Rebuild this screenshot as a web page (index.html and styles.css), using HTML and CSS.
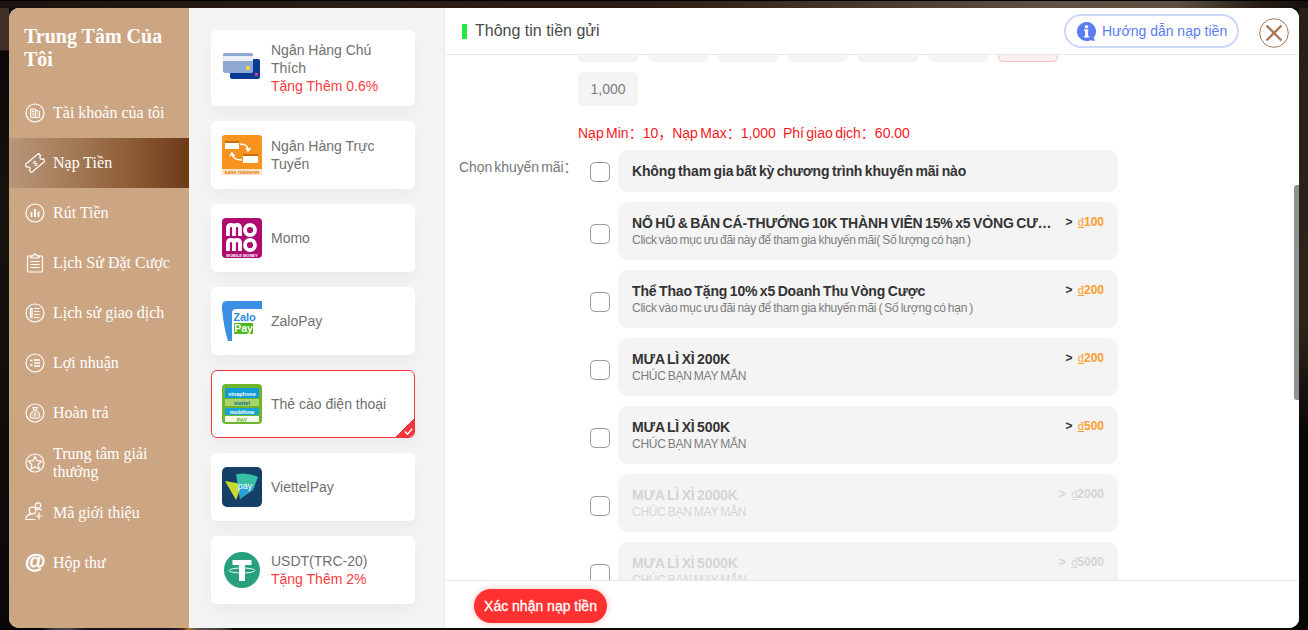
FILE: index.html
```html
<!DOCTYPE html>
<html lang="vi">
<head>
<meta charset="utf-8">
<title>Trung Tâm Của Tôi</title>
<link rel="stylesheet" href="styles.css">
</head>
<body>
<div class="modal">
  <aside class="side">
    <h1 class="side-title">Trung Tâm Của Tôi</h1>
    <nav class="nav">
      <a class="nav-item"><svg class="nav-ic" viewBox="0 0 20 20"><circle cx="10" cy="10" r="9"/><path class="soft" d="M5.500 6h5v8.500h-5zM10.500 7l4 1.500v6h-4M7 8.500h2M7 11h2"/></svg><span>Tài khoản của tôi</span></a>
      <a class="nav-item active"><svg class="nav-ic" viewBox="0 0 20 20"><path transform="rotate(-40 10 10)" d="M1 5h18v3a2 2 0 0 0 0 4v3H1v-3a2 2 0 0 0 0-4z"/><text x="10" y="13" class="dollar" transform="rotate(-25 10 10)">$</text></svg><span>Nạp Tiền</span></a>
      <a class="nav-item"><svg class="nav-ic" viewBox="0 0 20 20"><circle cx="10" cy="10" r="9"/><path class="bars" d="M6.500 9v5M10 6v8M13.500 8.500v5.500"/></svg><span>Rút Tiền</span></a>
      <a class="nav-item"><svg class="nav-ic" viewBox="0 0 20 20"><path d="M6 3H3.500q-1 0-1 1v14q0 1 1 1h13q1 0 1-1V4q0-1-1-1H14M6 5V2.800h2.300q.5-2 1.700-2t1.700 2H14V5zM5.500 8.500h9M5.500 11.500h9M5.500 14.500h9"/></svg><span>Lịch Sử Đặt Cược</span></a>
      <a class="nav-item"><svg class="nav-ic" viewBox="0 0 20 20"><circle cx="10" cy="10" r="9"/><path d="M5.500 5.500h1.500v9H5.500zM9 5.500h5.500M9 8.500h5.500M9 11.500h5.500M9 14.500h5.500"/></svg><span>Lịch sử giao dịch</span></a>
      <a class="nav-item"><svg class="nav-ic" viewBox="0 0 20 20"><circle cx="10" cy="10" r="9"/><path class="bars2" d="M5 7.500h2.500M5 12h2.500M9 7h6M9 10h6M9 13h6"/></svg><span>Lợi nhuận</span></a>
      <a class="nav-item"><svg class="nav-ic" viewBox="0 0 20 20"><circle cx="10" cy="10" r="9"/><path class="soft" d="M7.500 4.500h5L11 7.300q4 2 4 5.700 0 2.200-2 2.200H7q-2 0-2-2.200 0-3.700 4-5.700zM9 7.300h2M10 9.500v4"/></svg><span>Hoàn trả</span></a>
      <a class="nav-item"><svg class="nav-ic" viewBox="0 0 20 20"><circle cx="10" cy="10" r="9"/><path d="m10 3.500 2 4.200 4.600.6-3.400 3.200.9 4.500-4.100-2.200-4.100 2.200.9-4.500-3.400-3.200 4.600-.6z"/></svg><span>Trung tâm giải thưởng</span></a>
      <a class="nav-item"><svg class="nav-ic up" viewBox="0 0 20 20"><circle cx="7.500" cy="8.500" r="3.300"/><circle cx="13" cy="3.500" r="2.700"/><path d="M.8 17.500q0-4.800 5.700-5.300M.8 17.500h9.500M14 10.500v7M10.800 14h6.500M11 7.500q3-1 6 .8"/></svg><span>Mã giới thiệu</span></a>
      <a class="nav-item"><span class="at">@</span><span>Hộp thư</span></a>
    </nav>
  </aside>
  <section class="methods">
    <div class="method m1"><svg class="logo" viewBox="0 0 40 40"><rect x="8" y="11" width="30" height="20" rx="2" fill="#0a3a94"/><rect x="1" y="5" width="30" height="20" rx="2" fill="#8ea7d3"/><rect x="1" y="8" width="30" height="5" fill="#e9eef7"/><rect x="24" y="18" width="4" height="4" fill="#efd24c"/><rect x="33" y="25" width="3" height="3" fill="#d63a8c"/></svg><div class="m-txt"><div>Ngân Hàng Chú Thích</div><div class="bonus">Tặng Thêm 0.6%</div></div></div>
    <div class="method m2"><svg class="logo" viewBox="0 0 40 40"><rect width="40" height="40" rx="3" fill="#f7931e"/><rect y="34" width="40" height="6" fill="#fbe3c3"/><rect x="3" y="6" width="14" height="8" fill="#fff"/><rect x="3" y="6" width="14" height="2" fill="#c96f10"/><rect x="21" y="19" width="15" height="9" fill="#fff"/><rect x="21" y="19" width="15" height="2" fill="#c96f10"/><path d="M18 9q8 0 8 6M24 13l2 3 2.500-3M20 25q-9 0-10-6M8 21l2-3 2.500 3" fill="none" stroke="#fff" stroke-width="1.500"/><text x="20" y="39" class="tiny" fill="#e07d10">BANK TRANSFER</text></svg><div class="m-txt"><div>Ngân Hàng Trực Tuyến</div></div></div>
    <div class="method m3"><svg class="logo" viewBox="0 0 40 40"><rect width="40" height="40" rx="4" fill="#ae0a6f"/><g fill="none" stroke="#fff" stroke-width="3.800"><path d="M6 18v-8q0-3 3-3t3 3v8M12 10q0-3 3-3t3 3v8"/><circle cx="28" cy="12" r="5"/><path d="M6 33v-8q0-3 3-3t3 3v8M12 25q0-3 3-3t3 3v8"/><circle cx="28" cy="27" r="5"/></g><text x="20" y="38.600" class="tiny" fill="#fff">MOBILE MONEY</text></svg><div class="m-txt"><div>Momo</div></div></div>
    <div class="method m4"><svg class="logo" viewBox="0 0 40 40"><path d="M5 0h35v8H14q-4 0-4 4v28H6Q2 28 0 8V5q0-5 5-5z" fill="#3b8fe4"/><text x="22.500" y="20" class="zalo" fill="#2a8ae0">Zalo</text><rect x="12" y="22" width="19" height="11" rx="1" fill="#4db71a"/><text x="21.500" y="31" class="zalo2" fill="#fff">Pay</text></svg><div class="m-txt"><div>ZaloPay</div></div></div>
    <div class="method m5 selected"><svg class="logo" viewBox="0 0 40 40"><rect width="40" height="40" rx="4" fill="#6fb52c"/><rect x="3" y="4" width="34" height="10" fill="#0f9ad8"/><rect x="3" y="15" width="34" height="7" fill="#a9d46b"/><rect x="3" y="24" width="34" height="7" fill="#17a3d6"/><rect x="3" y="32" width="34" height="6" fill="#f3f8e8"/><text x="20" y="12" class="tiny2" fill="#fff">vinaphone</text><text x="20" y="20.500" class="tiny2" fill="#0b6f8e">viettel</text><text x="20" y="29.500" class="tiny2" fill="#fff">mobifone</text><text x="20" y="37.500" class="tiny2" fill="#6fb52c">PAY</text></svg><div class="m-txt"><div>Thẻ cào điện thoại</div></div><span class="tick"><svg viewBox="0 0 10 10" class="tick-ic"><path d="m1 5 3 3 5-6"/></svg></span></div>
    <div class="method m6"><svg class="logo" viewBox="0 0 40 40"><rect width="40" height="40" rx="5" fill="#143f67"/><path d="M3 14 20 17l-6 16z" fill="#c9d82e"/><path d="M14 7q12-2 22 3l-5 13-13 9z" fill="#35bfa6"/><path d="M18 32 33 20l-16-1z" fill="#2b9fd8"/><text x="23" y="22" class="vt" fill="#fff">pay</text></svg><div class="m-txt"><div>ViettelPay</div></div></div>
    <div class="method m7"><svg class="logo" viewBox="0 0 40 40"><circle cx="20" cy="20" r="18" fill="#26a17b"/><path d="M10.500 10h19v5H23v16h-6V15h-6.500z" fill="#fff"/><ellipse cx="20" cy="20.500" rx="13" ry="2.500" fill="none" stroke="#fff" stroke-width=".9"/></svg><div class="m-txt"><div>USDT(TRC-20)</div><div class="bonus">Tặng Thêm 2%</div></div></div>
  </section>
  <main class="panel">
    <header class="head">
      <div class="head-title"><i class="green"></i>Thông tin tiền gửi</div>
      <a class="guide"><svg class="guide-ic" viewBox="0 0 22 22"><path d="M11 1a10 10 0 1 0 4.200 19.100L20 21l-1.500-3.500A10 10 0 0 0 11 1z" fill="#5a7cf5"/><rect x="9.500" y="9" width="3.200" height="8" fill="#fff"/><rect x="8.300" y="9" width="4.400" height="1.500" fill="#fff"/><rect x="8.300" y="15.800" width="5.600" height="1.400" fill="#fff"/><circle cx="11" cy="6" r="1.900" fill="#fff"/></svg>Hướng dẫn nạp tiền</a>
      <button class="close" aria-label="Đóng"><svg viewBox="0 0 30 30" class="close-ic"><circle cx="15" cy="15" r="14.300"/><path d="m7.500 7.500 15 15M22.500 7.500l-15 15"/></svg></button>
    </header>
    <div class="body">
      <div class="amounts">
        <span class="amt"></span><span class="amt"></span><span class="amt"></span><span class="amt"></span><span class="amt"></span><span class="amt"></span><span class="amt on"></span>
      </div>
      <div class="amounts"><span class="amt">1,000</span></div>
      <p class="limits">Nạp Min：10，Nạp Max：1,000&nbsp;&nbsp; Phí giao dịch：60.00</p>
      <div class="promo-wrap">
        <div class="promo-label">Chọn khuyến mãi：</div>
        <div class="promos">
          <div class="row"><span class="check first"></span><div class="card single"><b class="p-title">Không tham gia bất kỳ chương trình khuyến mãi nào</b></div></div>
          <div class="row"><span class="check"></span><div class="card"><div class="p-main"><b class="p-title">NỔ HŨ &amp; BẮN CÁ-THƯỞNG 10K THÀNH VIÊN 15% x5 VÒNG CƯỢC</b><div class="p-sub">Click vào mục ưu đãi này để tham gia khuyến mãi( Số lượng có hạn )</div></div><div class="p-min">&gt; <u>đ</u><em>100</em></div></div></div>
          <div class="row"><span class="check"></span><div class="card"><div class="p-main"><b class="p-title">Thể Thao Tặng 10% x5 Doanh Thu Vòng Cược</b><div class="p-sub">Click vào mục ưu đãi này để tham gia khuyến mãi ( Số lượng có hạn )</div></div><div class="p-min">&gt; <u>đ</u><em>200</em></div></div></div>
          <div class="row"><span class="check"></span><div class="card"><div class="p-main"><b class="p-title">MƯA LÌ XÌ 200K</b><div class="p-sub">CHÚC BẠN MAY MẮN</div></div><div class="p-min">&gt; <u>đ</u><em>200</em></div></div></div>
          <div class="row"><span class="check"></span><div class="card"><div class="p-main"><b class="p-title">MƯA LÌ XÌ 500K</b><div class="p-sub">CHÚC BẠN MAY MẮN</div></div><div class="p-min">&gt; <u>đ</u><em>500</em></div></div></div>
          <div class="row"><span class="check"></span><div class="card off"><div class="p-main"><b class="p-title">MƯA LÌ XÌ 2000K</b><div class="p-sub">CHÚC BẠN MAY MẮN</div></div><div class="p-min">&gt; <u>đ</u><em>2000</em></div></div></div>
          <div class="row"><span class="check"></span><div class="card off"><div class="p-main"><b class="p-title">MƯA LÌ XÌ 5000K</b><div class="p-sub">CHÚC BẠN MAY MẮN</div></div><div class="p-min">&gt; <u>đ</u><em>5000</em></div></div></div>
        </div>
      </div>
      <div class="scrollbar"></div>
    </div>
    <footer class="foot"><button class="submit">Xác nhận nạp tiền</button></footer>
  </main>
</div>
</body>
</html>
```
FILE: styles.css
```css
* { box-sizing: border-box; }
html, body { margin: 0; height: 100%; overflow: hidden; }
body {
  font-family: "Liberation Sans", Arial, "Noto Sans CJK SC", sans-serif;
  background:
    linear-gradient(#000 0 1px, transparent 1px) top/100% 8px no-repeat,
    linear-gradient(90deg, #1c130e 0, #2a1d14 25%, #2c1e14 50%, #4a3c2e 68%, #5e5141 80%, #5c4f40 90%, #2a1e16 96%, #15100c 100%) top/100% 8px no-repeat,
    linear-gradient(90deg, #000 0, #000 3%, #3a3a36 4%, #4a4a44 5.200%, #201014 6.500%, #1a1420 13%, #4a2818 14%, #b5762a 14.400%, #5a5650 15%, #3c3c38 17%, #0b0a09 18%, #0b0a09 100%) bottom/100% 2px no-repeat,
    linear-gradient(#3f2f25 0, #3f2f25 50px, #0a0807 51px, #17120e 200px, #0a0807 630px) left/9px 100% no-repeat,
    linear-gradient(#2a2018 0, #2e2319 330px, #090806 430px, #090806 100%) right/9px 100% no-repeat,
    #0a0807;
  padding: 8px 9px 2px 9px;
  width: 1308px;
  height: 630px;
}
.modal {
  display: flex;
  width: 1290px;
  height: 620px;
  border-radius: 10px;
  overflow: hidden;
  background: #fff;
}
.side {
  width: 180px;
  flex: none;
  background: #cca583;
  color: #fff;
  font-family: "Liberation Serif", "Times New Roman", serif;
  padding-top: 17px;
}
.side-title { margin: 0; padding: 0 15px; font-size: 20px; line-height: 23px; font-weight: 700; height: 63px; }
.nav { display: flex; flex-direction: column; }
.nav-item {
  height: 50px;
  display: flex;
  align-items: center;
  gap: 8px;
  padding: 0 16px;
  font-size: 16px;
  line-height: 18px;
  color: #fff;
}
.nav-item.active { background: linear-gradient(90deg, #b8977a 0, #a47a56 35%, #8e5f38 65%, #6d3a18 100%); }
.nav-ic { width: 20px; height: 20px; flex: none; fill: none; stroke: #fff; stroke-width: 1.200; }
.nav-ic.up { margin-top: -2px; }
.nav-ic .soft { stroke-width: .9; fill: rgba(255,255,255,.25); }
.nav-ic .bars { stroke-width: 1.800; }
.nav-ic .bars2 { stroke-width: 1.700; }
.nav-ic .dollar { font: 400 7px "Liberation Sans", sans-serif; text-anchor: middle; fill: #fff; stroke: none; }
.at { width: 20px; flex: none; font: 700 21px/24px "Liberation Sans", sans-serif; margin-top: -4px; display: block; -webkit-text-stroke: .5px #fff; }

.methods {
  width: 256px;
  flex: none;
  background: #f4f4f4;
  padding: 22px 29px 0 22px;
  display: flex;
  flex-direction: column;
  gap: 15px;
  border-right: 1px solid #e9e9e9;
}
.method {
  position: relative;
  flex: none;
  height: 68px;
  background: #fff;
  border-radius: 6px;
  display: flex;
  align-items: center;
  gap: 9px;
  padding: 0 11px;
  font-size: 14px;
  line-height: 18px;
  color: #6f6f6f;
  box-shadow: 0 8px 16px rgba(0,0,0,.04);
}
.m1 { height: 76px; }
.logo { width: 40px; height: 40px; flex: none; }
.m-txt { min-width: 0; padding-right: 4px; }
.bonus { color: #fb3a3f; }
.selected { border: 1px solid #f5373d; padding: 0 10px; overflow: hidden; }
.tick { position: absolute; right: -1px; bottom: -1px; width: 20px; height: 20px; background: linear-gradient(135deg, transparent 50%, #f5373d 50%); }
.tick-ic { position: absolute; right: 2px; bottom: 2px; width: 9px; height: 9px; fill: none; stroke: #fff; stroke-width: 1.600; }
.tiny { font: 700 4px "Liberation Sans", sans-serif; text-anchor: middle; }
.tiny2 { font: 700 5.500px "Liberation Sans", sans-serif; text-anchor: middle; }
.zalo { font: 700 11px "Liberation Sans", sans-serif; text-anchor: middle; }
.zalo2 { font: 700 10.500px "Liberation Sans", sans-serif; text-anchor: middle; }
.vt { font: 400 9px "Liberation Sans", sans-serif; text-anchor: middle; }

.panel { flex: 1; min-width: 0; display: flex; flex-direction: column; background: #fff; }
.head {
  flex: none;
  height: 47px;
  border-bottom: 1px solid #e9e9e9;
  display: flex;
  align-items: center;
  padding-left: 17px;
  position: relative;
  z-index: 1;
  background: #fff;
}
.head-title { flex: 1; display: flex; align-items: center; font-size: 16px; color: #4a4a4a; }
.green { width: 5px; height: 15px; background: #27e83f; margin-right: 8px; }
.guide {
  height: 34px;
  width: 175px;
  border: 2px solid #cbd8fa;
  border-radius: 17px;
  display: flex;
  align-items: center;
  gap: 5px;
  padding-left: 10px;
  font-size: 14px;
  color: #5a7cf5;
}
.guide-ic { width: 21px; height: 21px; flex: none; }
.close { width: 30px; height: 30px; padding: 0; margin: 3px 10px 0 20px; border: 0; background: none; flex: none; }
.close-ic { display: block; width: 30px; height: 30px; fill: none; stroke: #a9795a; }
.close-ic path { stroke-width: 2.400; }

.body { flex: 1; min-height: 0; overflow: hidden; position: relative; padding-left: 133px; margin-top: -27px; }
.amounts { display: flex; gap: 10px; margin-bottom: 10px; }
.amt { width: 60px; height: 34px; border-radius: 5px; background: #f4f4f4; display: flex; align-items: center; justify-content: center; font-size: 14px; color: #7d7d7d; }
.amt.on { background: #feeeee; border: 1px solid #f9c0c0; }
.limits { margin: 0; font-size: 14px; line-height: 16px; color: #f51a1f; letter-spacing: 0; word-spacing: -1.500px; padding-top: 9px; }
.promo-wrap { position: relative; margin-top: 9px; }
.promo-label { position: absolute; left: -119px; top: 8px; font-size: 14px; line-height: 18px; color: #777; letter-spacing: -.1px; word-spacing: -1.500px; white-space: nowrap; }
.promos { display: flex; flex-direction: column; gap: 10px; padding-left: 12px; }
.row { display: flex; align-items: center; gap: 8px; flex: none; }
.check { width: 20px; height: 20px; margin-top: 6px; border: 1px solid #9a9a9a; border-radius: 5px; background: #fff; flex: none; }
.check.first { margin-top: 2px; }
.card {
  width: 500px;
  height: 58px;
  flex: none;
  border-radius: 10px;
  background: #f4f4f4;
  display: flex;
  justify-content: space-between;
  padding: 13px 14px 0 14px;
}
.card.single { height: 42px; padding-top: 13px; }
.p-main { min-width: 0; flex: 0 1 420px; }
.p-title { display: block; font-size: 14px; line-height: 17px; color: #333; letter-spacing: -.15px; word-spacing: -1.200px; white-space: nowrap; overflow: hidden; text-overflow: ellipsis; }
.p-sub { font-size: 12px; line-height: 14px; color: #7d7d7d; letter-spacing: -.26px; word-spacing: -.9px; white-space: nowrap; margin-top: 1px; }
.p-min { font-size: 12px; line-height: 14px; font-weight: 700; color: #333; white-space: nowrap; margin-top: 0; }
.p-min u, .p-min em { color: #fb9e2d; font-style: normal; }
.p-min u { font-weight: 400; font-size: 11px; margin-left: 2px; }
.off .p-title, .off .p-sub, .off .p-min, .off .p-min u, .off .p-min em { color: #d4d4d4; }
.scrollbar { position: absolute; right: 0; top: 157px; width: 5px; height: 215px; background: #909090; border-radius: 3px 0 0 3px; }

.foot { flex: none; height: 48px; border-top: 1px solid #e9e9e9; background: #fff; position: relative; padding: 8px 0 0 29px; }
.submit {
  display: block;
  width: 133px;
  height: 34px;
  border: 0;
  border-radius: 17px;
  background: #ff3131;
  color: #fff;
  font: 400 14px "Liberation Sans", sans-serif;
  -webkit-text-stroke: .3px #fff;
  box-shadow: 0 0 6px rgba(255,60,60,.35);
  padding: 0;
}
```
